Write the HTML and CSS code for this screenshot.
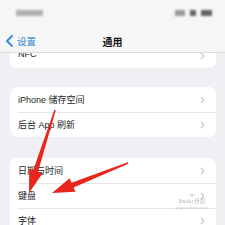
FILE: index.html
```html
<!DOCTYPE html>
<html lang="zh">
<head>
<meta charset="utf-8">
<link rel="stylesheet" href="styles.css">
</head>
<body>
<div class="page">
  <div class="status">
    <div class="blur blur-time"></div>
    <div class="status-right">
      <div class="blur b1"></div>
      <div class="blur b2"></div>
      <div class="blur b3"></div>
    </div>
  </div>
  <div class="nav">
    <div class="back">
      <svg class="back-icon" width="9" height="12" viewBox="0 0 9 12"><polyline points="7,1 2,6 7,11" fill="none" stroke="#3a86d8" stroke-width="1.8" stroke-linecap="round" stroke-linejoin="round"/></svg>
      <span>设置</span>
    </div>
    <div class="title">通用</div>
  </div>
  <div class="scroll">
    <div class="card card-first">
      <div class="row row-cut"><span>NFC</span><svg class="chev" width="5" height="8" viewBox="0 0 5 8"><polyline points="1,1 4,4 1,7" fill="none" stroke="#c6c6c9" stroke-width="1.1"/></svg></div>
    </div>
    <div class="card">
      <div class="row"><span>iPhone 储存空间</span><svg class="chev" width="5" height="8" viewBox="0 0 5 8"><polyline points="1,1 4,4 1,7" fill="none" stroke="#c6c6c9" stroke-width="1.1"/></svg></div>
      <div class="row"><span>后台 App 刷新</span><svg class="chev" width="5" height="8" viewBox="0 0 5 8"><polyline points="1,1 4,4 1,7" fill="none" stroke="#c6c6c9" stroke-width="1.1"/></svg></div>
    </div>
    <div class="card">
      <div class="row"><span>日期与时间</span><svg class="chev" width="5" height="8" viewBox="0 0 5 8"><polyline points="1,1 4,4 1,7" fill="none" stroke="#c6c6c9" stroke-width="1.1"/></svg></div>
      <div class="row"><span>键盘</span><svg class="chev" width="5" height="8" viewBox="0 0 5 8"><polyline points="1,1 4,4 1,7" fill="none" stroke="#c6c6c9" stroke-width="1.1"/></svg></div>
      <div class="row"><span>字体</span><svg class="chev" width="5" height="8" viewBox="0 0 5 8"><polyline points="1,1 4,4 1,7" fill="none" stroke="#c6c6c9" stroke-width="1.1"/></svg></div>
    </div>
  </div>
  <div class="watermark">
    <div class="wm-logo">ᵔᴥᵔ</div>
    <div class="wm-line">Baidu 经验</div>
    <div class="wm-sub">jingyan.baidu.com</div>
  </div>
  <svg class="arrows" width="225" height="225" viewBox="0 0 225 225">
    <polygon fill="#e8261c" points="55.8,110.3 38,171.8 42.6,173.2 29,193 29.2,168.8 33.2,170.2 54.4,109.7"/>
    <polygon fill="#e8261c" points="128.3,163.7 73.6,187.4 75.5,191.8 52,193 69.6,178.2 71.6,182.7 127.7,162.3"/>
  </svg>
</div>
</body>
</html>
```
FILE: styles.css
```css
html, body {
  margin: 0;
  padding: 0;
}
body {
  background: #efeff4;
  font-family: "Liberation Sans", "Noto Sans CJK SC", sans-serif;
  color: #1c1c1e;
}
.page {
  position: relative;
  width: 225px;
  height: 225px;
  overflow: hidden;
  background: #efeff4;
}
.status {
  height: 30px;
  background: #f6f6f6;
  display: flex;
  justify-content: space-between;
  align-items: flex-start;
  padding: 10px 12px 0 16px;
  box-sizing: border-box;
}
.blur {
  background: #b0b0b0;
  filter: blur(0.8px);
  height: 6px;
}
.blur-time {
  width: 27px;
}
.status-right {
  display: flex;
  gap: 5px;
  margin-right: 1px;
}
.b1 { width: 10px; background: #9a9a9a; }
.b2 { width: 6px; background: #626262; }
.b3 { width: 11px; background: #626262; }
.nav {
  position: relative;
  height: 22px;
  background: #f6f6f6;
  border-bottom: 1px solid #dcdcdf;
  display: flex;
  align-items: center;
  z-index: 1;
}
.back {
  display: flex;
  align-items: center;
  gap: 3px;
  padding-left: 5px;
  color: #3a86d8;
  font-size: 9.5px;
}
.back-icon {
  display: block;
}
.title {
  position: absolute;
  left: 0;
  right: 0;
  top: 0;
  bottom: 0;
  display: flex;
  align-items: center;
  justify-content: center;
  font-size: 10px;
  font-weight: 600;
  color: #111;
}
.scroll {
  padding: 0 9px 0 10px;
}
.card {
  background: #ffffff;
  border-radius: 7px;
  margin-top: 19px;
  overflow: hidden;
}
.card-first {
  margin-top: -10px;
  border-radius: 0 0 7px 7px;
}
.card + .card + .card {
  margin-top: 21px;
}
.row {
  height: 25px;
  display: flex;
  align-items: center;
  justify-content: space-between;
  padding: 0 11px 0 8px;
  font-size: 9px;
  color: #1c1c1e;
  position: relative;
}
.row-cut {
  box-sizing: border-box;
  padding-bottom: 4px;
}
.row-cut .chev {
  margin-top: 4px;
}
.row + .row::before {
  content: "";
  position: absolute;
  left: 8px;
  right: 0;
  top: 0;
  border-top: 1px solid #e6e6e8;
}
.chev {
  display: block;
}
.watermark {
  position: absolute;
  left: 170px;
  top: 193px;
  width: 44px;
  text-align: center;
  color: #b9b9bb;
  opacity: 0.8;
  line-height: 1;
}
.wm-logo {
  font-size: 5px;
  color: #aaa;
}
.wm-line {
  font-size: 5.5px;
  margin-top: 1px;
  color: #a8a8aa;
}
.wm-sub {
  font-size: 4px;
  margin-top: 1px;
  color: #c2c2c4;
}
.arrows {
  position: absolute;
  left: 0;
  top: 0;
}
```
